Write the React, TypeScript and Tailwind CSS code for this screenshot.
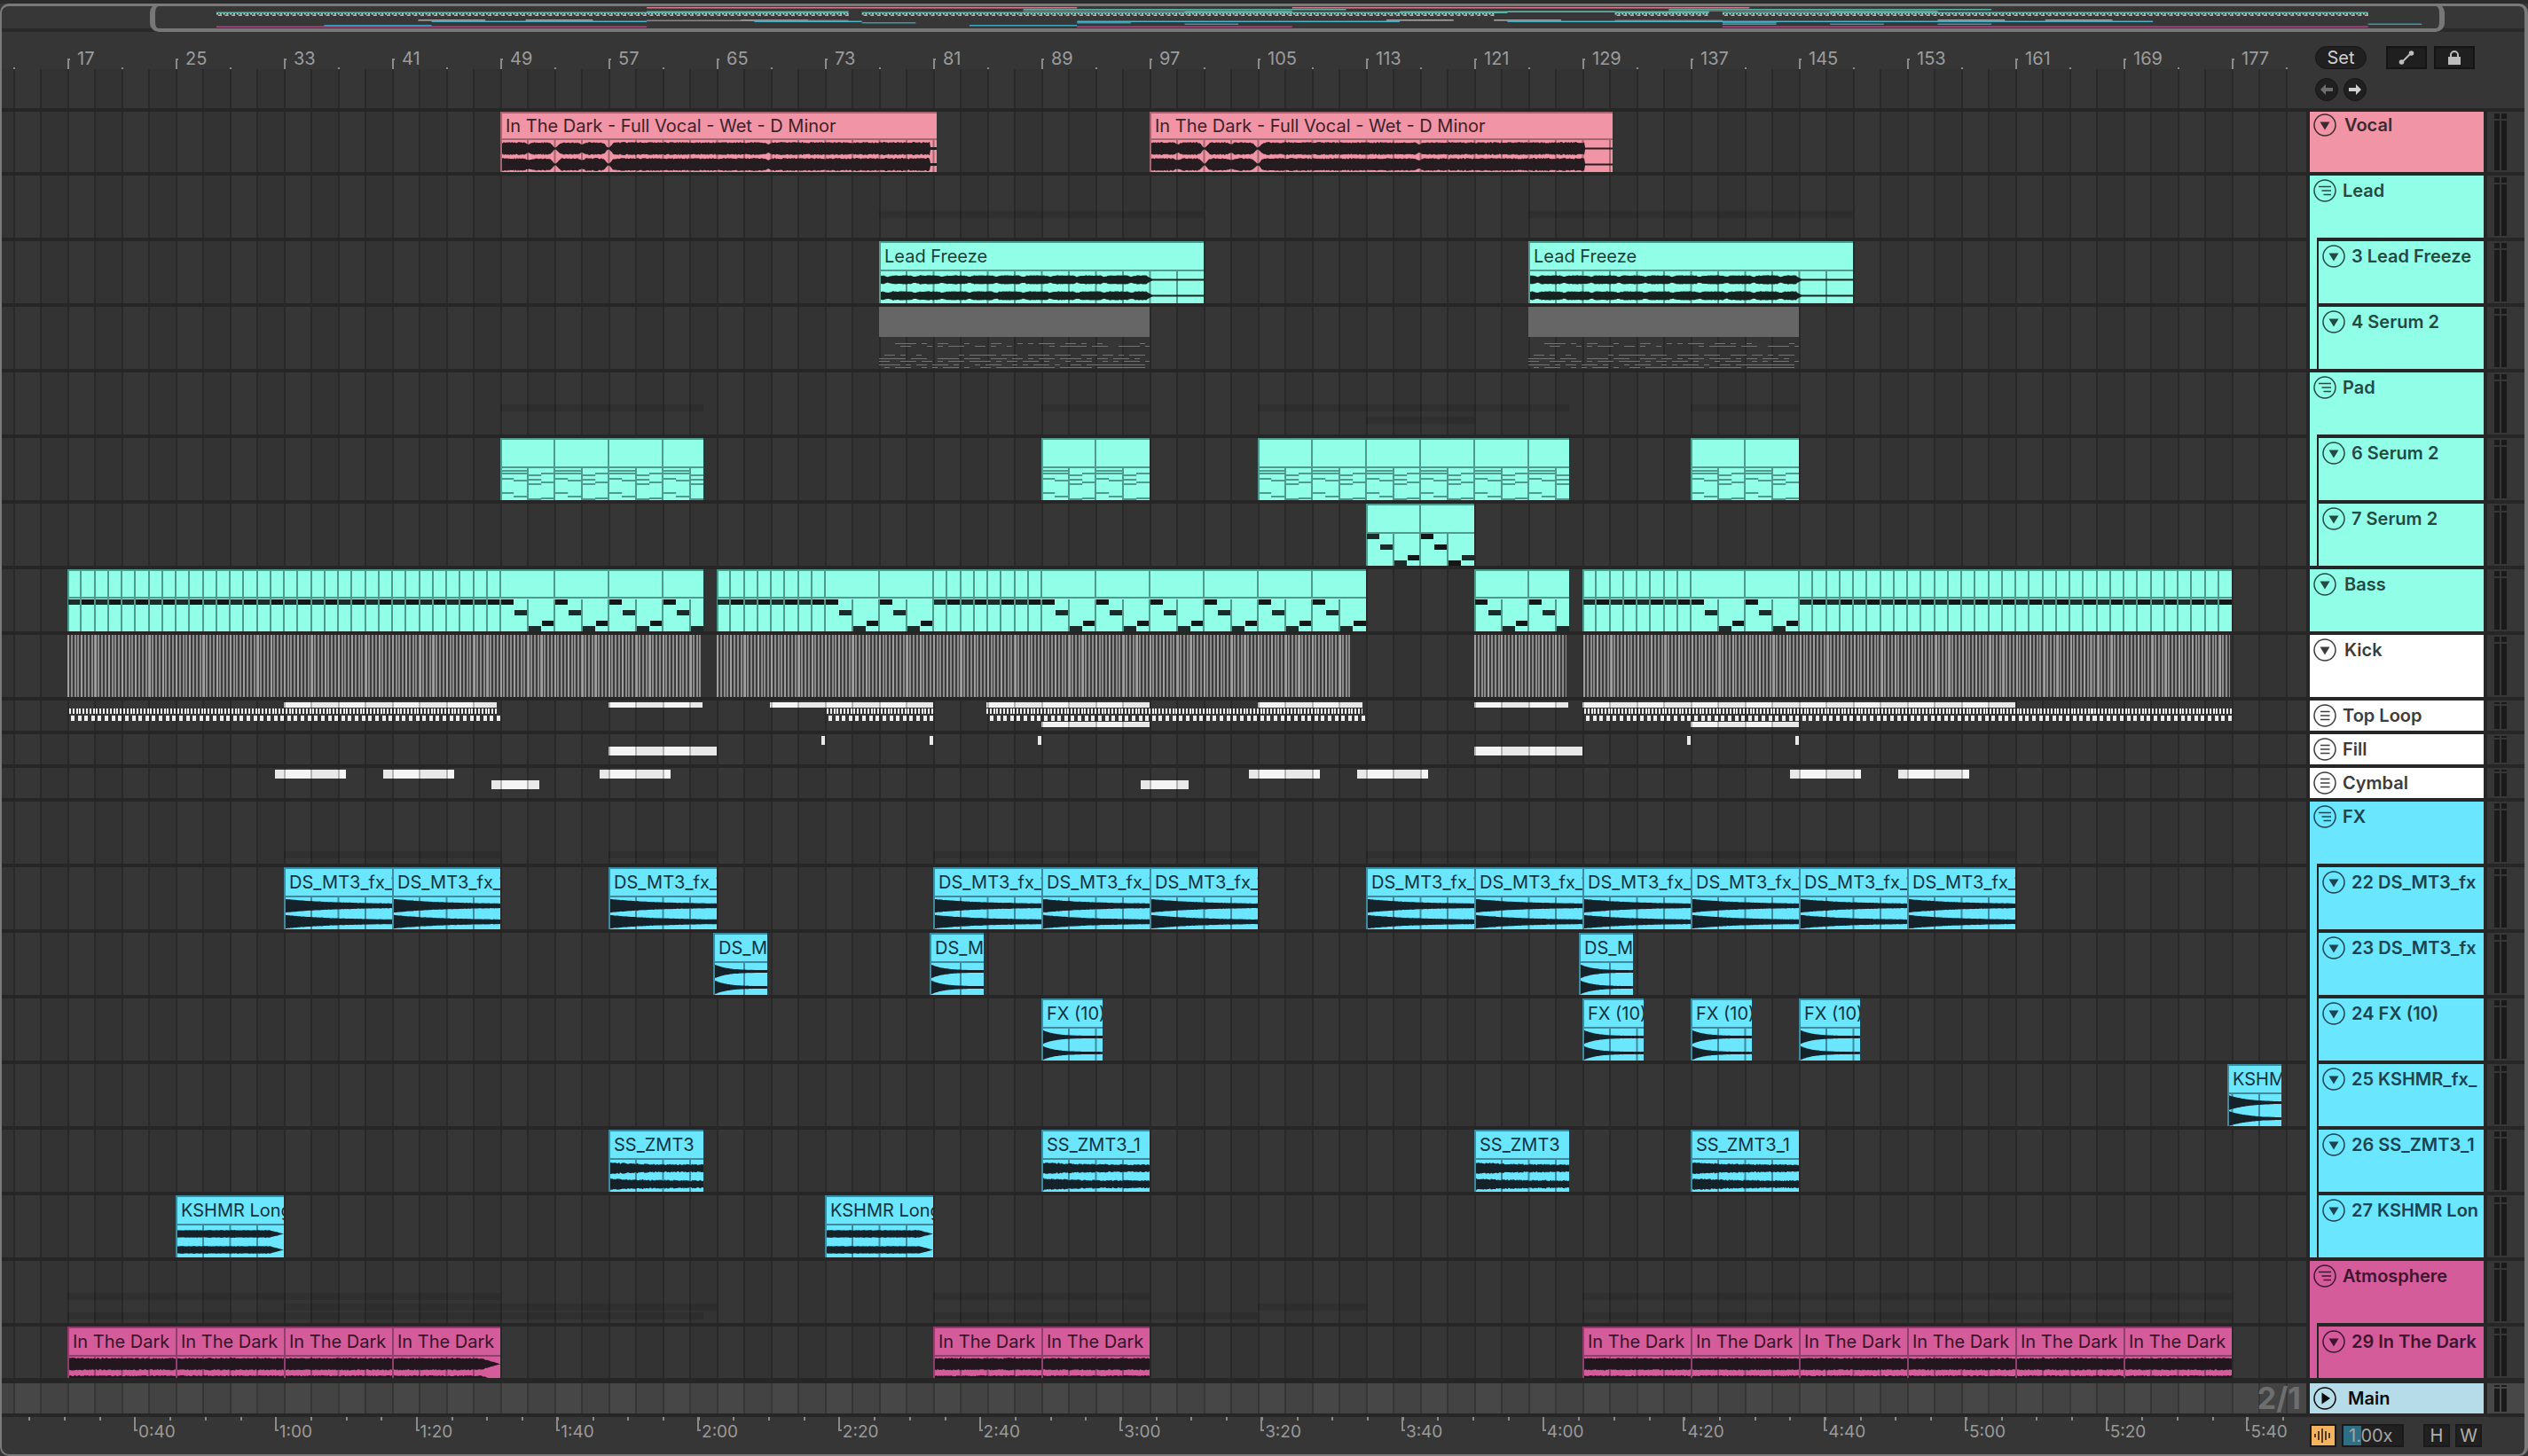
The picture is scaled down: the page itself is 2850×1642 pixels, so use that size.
import React from "react";

const x = (b: number) => Math.round(76 + (b - 17) * 15.25);
const ov = (b: number) => 244 + (b - 17) * 15.16;

type Pal = { bg: string; bd: string; tx: string; hd: string; line: string; wave: string };
const P: Record<string, Pal> = {
  pink: { bg: "bg-[#f194a6]", bd: "border-[#a3656f]", tx: "text-[#3d2229]", hd: "text-[#3d2a30]", line: "#a3656f", wave: "#241c1e" },
  teal: { bg: "bg-[#91ffe8]", bd: "border-[#4f9a8d]", tx: "text-[#1c3f39]", hd: "text-[#234a43]", line: "#4f9a8d", wave: "#17211f" },
  cyan: { bg: "bg-[#6be6ff]", bd: "border-[#3f8a9c]", tx: "text-[#12323b]", hd: "text-[#1b4450]", line: "#3f8a9c", wave: "#16222a" },
  mag: { bg: "bg-[#d55c9a]", bd: "border-[#8f3f6b]", tx: "text-[#36132a]", hd: "text-[#3d1530]", line: "#8f3f6b", wave: "#23161e" },
  white: { bg: "bg-[#ffffff]", bd: "border-[#999999]", tx: "text-[#3a3a3a]", hd: "text-[#3c3c3c]", line: "#999999", wave: "#222222" },
  main: { bg: "bg-[#b5dce8]", bd: "border-[#78929a]", tx: "text-[#0b0b0b]", hd: "text-[#0b0b0b]", line: "#78929a", wave: "#111111" },
};

const GRID =
  "bg-[repeating-linear-gradient(90deg,#292929_14.5px,#292929_16.5px,#363636_16.5px,#363636_45px,#292929_45px,#292929_47px,#333333_47px,#333333_75.5px)]";
const GRID_MAIN =
  "bg-[repeating-linear-gradient(90deg,#363636_14.5px,#363636_16.5px,#474747_16.5px,#474747_45px,#363636_45px,#363636_47px,#434343_47px,#434343_75.5px)]";

const rnd = (i: number, s: number) => {
  const v = Math.sin(i * 12.9898 + s * 78.233) * 43758.5453;
  return v - Math.floor(v);
};

function GridLines({ left, width, color, h }: { left: number; width: number; color: string; h: number }) {
  const out: React.ReactNode[] = [];
  for (let k = 0; k < 90; k++) {
    const X = 15.5 + 30.5 * k - left;
    if (X > 3 && X < width - 1) out.push(<rect key={k} x={X - 1} y={0} width={2} height={h} fill={color} />);
  }
  return <>{out}</>;
}

type Kind = "vocal" | "vocal2" | "freeze" | "decay" | "fast" | "band" | "noisy" | "kshmr" | "dark" | "darkEnd";

function ampFor(kind: Kind, px: number, w: number, seed: number, ch: number) {
  const n = rnd(px + ch * 31, seed);
  const pinch = (c: number, d: number, s: number) => 1 - d * Math.exp(-(((px - c) / s) ** 2));
  switch (kind) {
    case "vocal":
    case "vocal2": {
      let a = 6 + n * 1.5;
      [[30, 0.3, 3], [60, 0.85, 4], [90, 0.3, 3], [120, 0.85, 4], [kind === "vocal" ? 300 : 302, 0.3, 3]].forEach(
        ([c, d, s]) => (a *= pinch(c, d, s))
      );
      const tailAt = kind === "vocal" ? 482 : 488;
      if (px > tailAt) a = kind === "vocal" ? 1.5 : 1;
      return a;
    }
    case "freeze": {
      let a = 4.4 + n * 0.8;
      const ph = (px + 7) % 30.5;
      a *= 1 - 0.3 * Math.exp(-(((ph - 15) / 3) ** 2));
      if (px > 306) a = 0.9;
      else if (px > 300) a = 0.9 + (306 - px) * 0.5;
      return a;
    }
    case "decay":
      return 1.8 + 5.6 * Math.exp(-px / 55) + n * 0.4;
    case "fast":
      return 1.2 + 6.4 * Math.exp(-px / 14) + n * 0.2;
    case "band":
      return (3.8 + n * 0.6) * (px > w - 16 ? Math.max(0, (w - px) / 16) : 1);
    case "noisy":
      return 3 + 2.6 * Math.exp(-px / 40) + n * 1.6;
    case "kshmr":
      return 0.8 + 7.4 * Math.exp(-px / 22) + n * 0.2;
    case "dark":
      return 5.8 + n * 1.4;
    case "darkEnd":
      return (5.8 + n * 1.4) * (px > w - 22 ? Math.max(0.05, (w - px) / 22) : 1);
  }
}

function Wave({ kind, left, width, pal, h = 36, seed = 1 }: { kind: Kind; left: number; width: number; pal: Pal; h?: number; seed?: number }) {
  const w = width - 2;
  const dark = kind === "dark" || kind === "darkEnd";
  const cs = dark ? [8.3, 28] : [9.5, 27.5];
  const paths = cs.map((c, ci) => {
    const up: string[] = [];
    const dn: string[] = [];
    for (let px = 0; px <= w; px += 1) {
      const a = ampFor(kind, px, w, seed, ci);
      up.push(`${px},${(c - a).toFixed(1)}`);
      dn.unshift(`${px},${(c + a).toFixed(1)}`);
    }
    return "M" + up.join("L") + "L" + dn.join("L") + "Z";
  });
  return (
    <svg width={w} height={h} className="block shrink-0">
      <GridLines left={left + 2} width={w} color={pal.line} h={h} />
      {paths.map((d, i) => (
        <path key={i} d={d} fill={pal.wave} />
      ))}
    </svg>
  );
}

function Clip({ from, to, title, pal, kind, short, seed }: { from: number; to: number; title: string; pal: Pal; kind: Kind; short?: boolean; seed?: number }) {
  const left = x(from);
  const width = x(to) - left;
  return (
    <div className={`absolute top-0 bottom-0 flex flex-col overflow-hidden border-l-2 border-t-2 ${pal.bg} ${pal.bd}`} style={{ left, width }}>
      <div className={`min-h-0 flex-1 flex items-center pl-[4px] border-b-2 whitespace-nowrap text-[20px] leading-none ${pal.bd} ${pal.tx}`}>{title}</div>
      <Wave kind={kind} left={left} width={width} pal={pal} h={short ? 24 : 36} seed={seed ?? from} />
    </div>
  );
}

const LEVEL = [0, 12, 30, 24];

function BassClip({ from, to, pats }: { from: number; to: number; pats: [number, number][] }) {
  const left = x(from);
  const W = x(to) - left;
  const inPat = (b: number) => pats.find(([a, z]) => b >= a && b < z);
  const els: React.ReactNode[] = [];
  for (let b = from; b < to; b++) {
    const X = x(b) - left;
    const pat = inPat(b);
    const nw = Math.min(14, W - X);
    if (pat) {
      const ph = (b - pat[0]) % 4;
      els.push(<rect key={"n" + b} x={X + 1} y={34 + LEVEL[ph]} width={nw} height={6} fill={(b >> 1) % 2 ? "#1c2c2a" : "#121616"} />);
      if ((b - pat[0]) % 4 === 0 && b > from) els.push(<rect key={"t" + b} x={X - 1} y={2} width={2} height={30} fill="#4f9a8d" />);
      if ((b - pat[0]) % 2 === 0 && b > from) els.push(<rect key={"c" + b} x={X - 1} y={34} width={2} height={36} fill="#4f9a8d" />);
    } else {
      els.push(<rect key={"n" + b} x={X + 1} y={34} width={nw} height={6} fill={b % 2 ? "#1c2c2a" : "#121616"} />);
      if (b > from) els.push(<rect key={"l" + b} x={X - 1} y={2} width={2} height={68} fill="#4f9a8d" />);
    }
  }
  return (
    <svg className="absolute top-0 block" style={{ left }} width={W} height={70}>
      <rect width={W} height={70} fill="#91ffe8" />
      <rect width={W} height={2} fill="#4f9a8d" />
      <rect width={2} height={70} fill="#4f9a8d" />
      <rect y={31} width={W} height={2} fill="#4f9a8d" />
      {els}
    </svg>
  );
}

const PAD_LINES = [
  [2, 5, 11, 27],
  [2, 5, 13, 31],
  [7, 12, 17, 34],
  [5, 15, 33],
];

function PadClip({ from, to }: { from: number; to: number }) {
  const left = x(from);
  const W = x(to) - left;
  const els: React.ReactNode[] = [];
  for (let b = from; b < to; b++) {
    const X = x(b) - left;
    const ph = (b - from) % 4;
    PAD_LINES[ph].forEach((y, i) => els.push(<rect key={`${b}-${i}`} x={X} y={34 + y} width={Math.min(15.25, W - X)} height={2} fill="#4f9a8d" />));
    if (ph === 0 && b > from) els.push(<rect key={"t" + b} x={X - 1} y={2} width={2} height={30} fill="#4f9a8d" />);
    if (ph % 2 === 0 && b > from) els.push(<rect key={"c" + b} x={X - 1} y={34} width={2} height={36} fill="#4f9a8d" />);
  }
  return (
    <svg className="absolute top-0 block" style={{ left }} width={W} height={70}>
      <rect width={W} height={70} fill="#91ffe8" />
      <rect width={W} height={2} fill="#4f9a8d" />
      <rect width={2} height={70} fill="#4f9a8d" />
      <rect y={32} width={W} height={2} fill="#4f9a8d" />
      {els}
    </svg>
  );
}

function NoteClip({ from, to }: { from: number; to: number }) {
  const left = x(from);
  const W = x(to) - left;
  const els: React.ReactNode[] = [];
  for (let b = from; b < to; b++) {
    const X = x(b) - left;
    const ph = (b - from) % 4;
    els.push(<rect key={"n" + b} x={X + 1} y={34 + LEVEL[ph]} width={14} height={6} fill={(b >> 2) % 2 ? "#121616" : "#1c2c2a"} />);
    if (ph === 0 && b > from) els.push(<rect key={"t" + b} x={X - 1} y={2} width={2} height={30} fill="#4f9a8d" />);
    if (ph % 2 === 0 && b > from) els.push(<rect key={"c" + b} x={X - 1} y={34} width={2} height={36} fill="#4f9a8d" />);
  }
  return (
    <svg className="absolute top-0 block" style={{ left }} width={W} height={70}>
      <rect width={W} height={70} fill="#91ffe8" />
      <rect width={W} height={2} fill="#4f9a8d" />
      <rect width={2} height={70} fill="#4f9a8d" />
      <rect y={32} width={W} height={2} fill="#4f9a8d" />
      {els}
    </svg>
  );
}

function Frozen({ from, to }: { from: number; to: number }) {
  const left = x(from);
  const W = x(to) - left;
  const rows = [7, 10, 20, 24, 27, 31, 34];
  const els: React.ReactNode[] = [];
  for (let px = 0; px < W; px += 6) {
    rows.forEach((y, i) => {
      if (rnd(Math.floor(px / 6) + i * 17, 3) > 0.45)
        els.push(<rect key={`${px}-${i}`} x={px} y={y} width={6} height={1} fill="#727272" />);
    });
  }
  return (
    <div className="absolute top-0 bottom-0 flex flex-col" style={{ left, width: W }}>
      <div className="h-[34px] bg-[#666666]" />
      <svg width={W} height={36} className="block">
        {els}
      </svg>
    </div>
  );
}

const Mini = ({ l, r, cls }: { l: number; r: number; cls: string }) => <div className={`absolute ${cls}`} style={{ left: l, width: r - l }} />;

const Stripes = ({ y, spans }: { y: string; spans: [number, number][] }) => (
  <>
    {spans.map(([a, b], i) => (
      <div key={i} className={`absolute h-[8px] bg-black/10 ${y}`} style={{ left: x(a), width: x(b) - x(a) }} />
    ))}
  </>
);

const KICK =
  "absolute top-0 bottom-0 bg-[repeating-linear-gradient(90deg,#a0a0a0_0,#a0a0a0_2px,transparent_2px,transparent_15.25px),repeating-linear-gradient(90deg,#8c8c8c_0,#8c8c8c_2px,#3c3c3c_2px,#3c3c3c_3.81px)]";
const WHITE_BG =
  "bg-fixed bg-[repeating-linear-gradient(90deg,#b4b4b4_14.5px,#b4b4b4_16.5px,#f4f4f4_16.5px,#f4f4f4_45px,#b4b4b4_45px,#b4b4b4_47px,#e8e8e8_47px,#e8e8e8_75.5px)]";
const TA = `top-[2px] h-[6px] ${WHITE_BG}`;
const TB = "top-[9px] h-[6px] bg-[repeating-linear-gradient(90deg,#eeeeee_0,#eeeeee_2px,transparent_2px,transparent_3.81px)]";
const TC = "top-[17px] h-[6px] bg-[repeating-linear-gradient(90deg,#eeeeee_0,#eeeeee_4px,transparent_4px,transparent_7.62px)]";
const TD = `top-[24px] h-[6px] ${WHITE_BG}`;
const FT = "top-[2px] h-[10px] w-[4px] bg-[#e8e8e8]";
const FB = `top-[14px] h-[10px] ${WHITE_BG}`;
const CA = `top-[2px] h-[10px] ${WHITE_BG}`;
const CB = `top-[14px] h-[10px] ${WHITE_BG}`;

const bars = (a: number, n: number, step = 8) => Array.from({ length: n }, (_, i) => a + i * step);

type Row = { name: string; h: number; pal: string; icon: "fold" | "group" | "list"; strip?: string; lane?: React.ReactNode };

const rows: Row[] = [
  {
    name: "Vocal", h: 68, pal: "pink", icon: "fold",
    lane: (
      <>
        <Clip from={49} to={81.25} title="In The Dark - Full Vocal - Wet - D Minor" pal={P.pink} kind="vocal" />
        <Clip from={97} to={131.25} title="In The Dark - Full Vocal - Wet - D Minor" pal={P.pink} kind="vocal2" />
      </>
    ),
  },
  { name: "Lead", h: 70, pal: "teal", icon: "group", lane: <Stripes y="top-[40px]" spans={[[77, 101], [125, 149]]} /> },
  {
    name: "3 Lead Freeze", h: 70, pal: "teal", icon: "fold", strip: "teal",
    lane: (
      <>
        <Clip from={77} to={101} title="Lead Freeze" pal={P.teal} kind="freeze" />
        <Clip from={125} to={149} title="Lead Freeze" pal={P.teal} kind="freeze" />
      </>
    ),
  },
  { name: "4 Serum 2", h: 70, pal: "teal", icon: "fold", strip: "teal", lane: (<><Frozen from={77} to={97} /><Frozen from={125} to={145} /></>) },
  {
    name: "Pad", h: 70, pal: "teal", icon: "group",
    lane: (<><Stripes y="top-[36px]" spans={[[49, 64], [89, 97], [105, 128], [137, 145]]} /><Stripes y="top-[50px]" spans={[[113, 121]]} /></>),
  },
  { name: "6 Serum 2", h: 70, pal: "teal", icon: "fold", strip: "teal", lane: (<><PadClip from={49} to={64} /><PadClip from={89} to={97} /><PadClip from={105} to={128} /><PadClip from={137} to={145} /></>) },
  { name: "7 Serum 2", h: 70, pal: "teal", icon: "fold", strip: "teal", lane: <NoteClip from={113} to={121} /> },
  {
    name: "Bass", h: 70, pal: "teal", icon: "fold",
    lane: (
      <>
        <BassClip from={17} to={64} pats={[[49, 64]]} />
        <BassClip from={65} to={113} pats={[[73, 81], [89, 113]]} />
        <BassClip from={121} to={128} pats={[[121, 128]]} />
        <BassClip from={129} to={177} pats={[[137, 145]]} />
      </>
    ),
  },
  {
    name: "Kick", h: 70, pal: "white", icon: "fold",
    lane: (
      <>
        <Mini l={76} r={790} cls={KICK} />
        <Mini l={808} r={1522} cls={KICK} />
        <Mini l={1662} r={1766} cls={KICK} />
        <Mini l={1785} r={2514} cls={KICK} />
      </>
    ),
  },
  {
    name: "Top Loop", h: 34, pal: "white", icon: "list",
    lane: (
      <>
        {[[320, 560], [686, 792], [868, 1052], [1112, 1296], [1418, 1536], [1662, 1768], [1784, 2272]].map(([l, r]) => <Mini key={l} l={l} r={r} cls={TA} />)}
        {[[78, 560], [932, 1052], [1112, 1536], [1786, 2516]].map(([l, r]) => <Mini key={l} l={l} r={r} cls={TB} />)}
        {[[80, 564], [934, 1052], [1116, 1540], [1788, 2516]].map(([l, r]) => <Mini key={l} l={l} r={r} cls={TC} />)}
        {[[1174, 1296], [1906, 2028]].map(([l, r]) => <Mini key={l} l={l} r={r} cls={TD} />)}
      </>
    ),
  },
  {
    name: "Fill", h: 34, pal: "white", icon: "list",
    lane: (
      <>
        {[926, 1048, 1170, 1902, 2024].map((l) => <Mini key={l} l={l} r={l + 4} cls={FT} />)}
        <Mini l={686} r={808} cls={FB} />
        <Mini l={1662} r={1784} cls={FB} />
      </>
    ),
  },
  {
    name: "Cymbal", h: 34, pal: "white", icon: "list",
    lane: (
      <>
        {[[310, 390], [432, 512], [676, 756], [1408, 1488], [1530, 1610], [2018, 2098], [2140, 2220]].map(([l, r]) => <Mini key={l} l={l} r={r} cls={CA} />)}
        {[[554, 608], [1286, 1340]].map(([l, r]) => <Mini key={l} l={l} r={r} cls={CB} />)}
      </>
    ),
  },
  { name: "FX", h: 70, pal: "cyan", icon: "group", lane: <Stripes y="top-[56px]" spans={[[33, 49], [57, 65], [81, 105], [113, 161]]} /> },
  {
    name: "22 DS_MT3_fx", h: 70, pal: "cyan", icon: "fold", strip: "cyan",
    lane: <>{[33, 41, 57, 81, 89, 97, 113, 121, 129, 137, 145, 153].map((b) => <Clip key={b} from={b} to={b + 8} title="DS_MT3_fx_1" pal={P.cyan} kind="decay" />)}</>,
  },
  { name: "23 DS_MT3_fx", h: 70, pal: "cyan", icon: "fold", strip: "cyan", lane: <>{[64.75, 80.75, 128.75].map((b) => <Clip key={b} from={b} to={b + 4} title="DS_MT3_fx_1" pal={P.cyan} kind="fast" />)}</> },
  { name: "24 FX (10)", h: 70, pal: "cyan", icon: "fold", strip: "cyan", lane: <>{[89, 129, 137, 145].map((b) => <Clip key={b} from={b} to={b + 4.55} title="FX (10)" pal={P.cyan} kind="fast" />)}</> },
  { name: "25 KSHMR_fx_", h: 70, pal: "cyan", icon: "fold", strip: "cyan", lane: <Clip from={176.7} to={180.7} title="KSHMR_fx" pal={P.cyan} kind="kshmr" /> },
  {
    name: "26 SS_ZMT3_1", h: 70, pal: "cyan", icon: "fold", strip: "cyan",
    lane: (
      <>
        <Clip from={57} to={64} title="SS_ZMT3" pal={P.cyan} kind="noisy" />
        <Clip from={89} to={97} title="SS_ZMT3_1" pal={P.cyan} kind="noisy" />
        <Clip from={121} to={128} title="SS_ZMT3" pal={P.cyan} kind="noisy" />
        <Clip from={137} to={145} title="SS_ZMT3_1" pal={P.cyan} kind="noisy" />
      </>
    ),
  },
  { name: "27 KSHMR Lon", h: 70, pal: "cyan", icon: "fold", strip: "cyan", lane: <>{[25, 73].map((b) => <Clip key={b} from={b} to={b + 8} title="KSHMR Long" pal={P.cyan} kind="band" />)}</> },
  {
    name: "Atmosphere", h: 70, pal: "mag", icon: "group",
    lane: (
      <>
        <Stripes y="top-[36px]" spans={[[17, 49], [81, 97], [129, 177]]} />
        <Stripes y="top-[48px]" spans={[[33, 65], [105, 113]]} />
        <Stripes y="top-[58px]" spans={[[17, 64], [81, 105], [129, 177]]} />
      </>
    ),
  },
  {
    name: "29 In The Dark", h: 58, pal: "mag", icon: "fold", strip: "mag",
    lane: (
      <>
        {[17, 25, 33, 41, 81, 89, 129, 137, 145, 153, 161, 169].map((b) => (
          <Clip key={b} from={b} to={b + 8} title="In The Dark" pal={P.mag} kind={b === 41 ? "darkEnd" : "dark"} short />
        ))}
      </>
    ),
  },
];

function TrackIcon({ kind, pal }: { kind: "fold" | "group" | "list" | "play"; pal: Pal }) {
  return (
    <svg width={26} height={26} viewBox="0 0 26 26" className={`block shrink-0 ${pal.hd}`}>
      <circle cx={13} cy={13} r={12} fill="none" stroke="currentColor" strokeWidth={1.5} />
      {kind === "fold" && <path d="M7.5 9.5H18.5L13 18.5Z" fill="currentColor" />}
      {kind === "play" && <path d="M9.5 6.5L19 13L9.5 19.5Z" fill="currentColor" />}
      {kind === "group" && <path d="M6 8.5H20M9.5 13H20M11.5 17.5H20" stroke="currentColor" strokeWidth={1.6} fill="none" />}
      {kind === "list" && <path d="M8 8.5H18.5M8 13H18.5M8 17.5H18.5" stroke="currentColor" strokeWidth={1.6} fill="none" />}
    </svg>
  );
}

const Meter = ({ tall }: { tall: boolean }) => (
  <div className="flex h-full gap-[2px]">
    {[0, 1].map((i) => (
      <div key={i} className="flex h-full w-[6px] flex-col gap-[2px]">
        <div className={`w-full bg-[#1a1a1a] ${tall ? "h-[6px]" : "h-[2px]"}`} />
        <div className="w-full flex-1 bg-[#1a1a1a]" />
      </div>
    ))}
  </div>
);

function TrackRow({ r }: { r: Row }) {
  const pal = P[r.pal];
  const isLow = r.icon === "list";
  return (
    <div className="flex" style={{ height: r.h }}>
      <div className={`relative h-full w-[2600px] ${GRID}`}>{r.lane}</div>
      <div className={`relative ml-[4px] h-full w-[196px] ${r.strip ? "pl-[10px]" : ""}`}>
        {r.strip && <div className={`absolute bottom-0 left-0 top-[-4px] w-[8px] ${P[r.strip].bg}`} />}
        <div className={`flex h-full items-start pl-[4px] ${r.name === "Vocal" ? "pt-[2px]" : "pt-[4px]"} ${pal.bg}`}>
          <TrackIcon kind={r.icon} pal={pal} />
          <span
            className={`whitespace-nowrap font-semibold text-[20px] leading-[26px] ${pal.hd} ${r.strip ? "ml-[7px]" : r.icon === "fold" ? "ml-[9px]" : "ml-[7px]"}`}
          >
            {r.name}
          </span>
        </div>
      </div>
      <div className="ml-[4px] h-full flex-1 bg-[#363636] py-[2px] pl-[8px]">
        <Meter tall={!isLow} />
      </div>
    </div>
  );
}

function Overview() {
  type O = [number, number, number, string];
  const d: O[] = [];
  const add = (y: number, c: string, sp: number[][]) => sp.forEach(([a, b]) => d.push([a, b, y, c]));
  add(8, "#d8788a", [[49, 81], [97, 131]]);
  add(10, "#58b0a0", [[77, 101], [125, 149]]);
  add(11.5, "#777777", [[77, 97], [125, 145]]);
  add(12.5, "#58b0a0", [[49, 64], [89, 97], [105, 128], [137, 145], [113, 121]]);
  add(13.5, "#5db4a6", [[17, 64], [65, 113], [121, 128], [129, 177]]);
  add(22, "#aaaaaa", [[32, 37], [40, 45], [56, 61], [104, 109], [112, 117], [145, 150], [153, 158]]);
  add(23.5, "#49b3cc", [[33, 49], [57, 65], [81, 105], [113, 161]]);
  add(25, "#3a97ac", [[65, 69], [81, 85], [129, 133]]);
  add(26.5, "#3a97ac", [[89, 93], [129, 133], [137, 141], [145, 149], [177, 181]]);
  add(28, "#3fa6bd", [[25, 33], [73, 81]]);
  add(29.5, "#a84b80", [[17, 49], [81, 97], [129, 177]]);
  add(22.5, "#888888", [[49, 64], [121, 129]]);
  const dots: React.ReactNode[] = [];
  [[17, 64], [65, 112], [121, 128], [129, 177]].forEach(([a, b], i) => {
    for (let px = ov(a); px < ov(b); px += 3.8) dots.push(<rect key={`a${i}-${px}`} x={px} y={15} width={2} height={1.5} fill="#c8c8c8" />);
    for (let px = ov(a) + 2; px < ov(b); px += 7.6) dots.push(<rect key={`b${i}-${px}`} x={px} y={16.5} width={4} height={1.5} fill="#b8b8b8" />);
  });
  return (
    <div className="relative h-[36px] w-full shrink-0 bg-[#2b2b2b] pt-[4px]">
      <div className="flex h-full flex-col">
        <div className="min-h-0 flex-1 bg-[#373737]" />
        <div className="h-[4px] bg-[#2a2a2a]" />
      </div>
      <svg width={2850} height={36} className="absolute left-0 top-0 block">
        {d.map(([a, b, y, c], i) => (
          <rect key={i} x={ov(a)} y={y} width={ov(b) - ov(a)} height={1.5} fill={c} />
        ))}
        {dots}
      </svg>
      <div className="absolute left-[169px] top-[4px] h-[32px] w-[2587px] rounded-[10px] border-x-[6px] border-b-[4px] border-t-[3px] border-[#777777] bg-transparent" />
    </div>
  );
}

const MARKS = bars(17, 21);
const TIMES = ["0:40", "1:00", "1:20", "1:40", "2:00", "2:20", "2:40", "3:00", "3:20", "3:40", "4:00", "4:20", "4:40", "5:00", "5:20", "5:40"];

function Ruler() {
  return (
    <div className="flex h-[86px] shrink-0 bg-[#363636]">
      <div className="flex w-[2600px] flex-col">
        <div className="relative flex h-[42px] items-end overflow-hidden pl-[76px]">
          <div className="absolute bottom-0 left-[15px] h-[2px] w-[2px] bg-[#8a8a8a]" />
          {MARKS.map((m) => (
            <div key={m} className="relative flex h-full w-[122px] shrink-0 items-end">
              <div className="h-[12px] w-[3px] border-l-2 border-t-2 border-[#8a8a8a]" />
              <span className="mb-[2px] ml-[8px] text-[20px] leading-[20px] text-[#9c9c9c]">{m}</span>
              <div className="absolute bottom-0 left-[61px] h-[2px] w-[2px] bg-[#8a8a8a]" />
            </div>
          ))}
        </div>
        <div className={`h-[44px] ${GRID}`} />
      </div>
      <div className="flex-1 pl-[10px] pt-[16px]">
        <div className="flex items-center">
          <div className="flex h-[26px] w-[58px] items-center justify-center rounded-full border border-[#161616] bg-[#202020] text-[20px] leading-none text-[#cfcfcf]">Set</div>
          <div className="ml-[22px] flex h-[26px] w-[46px] items-center justify-center border-2 border-[#141414] bg-[#1f1f1f]">
            <svg width={18} height={16} viewBox="0 0 18 16">
              <path d="M4 13L14 3" stroke="#bdbdbd" strokeWidth={2} />
              <circle cx={3.5} cy={13} r={2.8} fill="#bdbdbd" />
              <circle cx={14.5} cy={3} r={2.8} fill="#bdbdbd" />
            </svg>
          </div>
          <div className="ml-[8px] flex h-[26px] w-[46px] items-center justify-center border-2 border-[#141414] bg-[#1f1f1f]">
            <svg width={16} height={16} viewBox="0 0 16 16">
              <path d="M4 7V5a4 4 0 0 1 8 0v2" fill="none" stroke="#bdbdbd" strokeWidth={2} />
              <rect x={1} y={7} width={14} height={9} fill="#bdbdbd" />
            </svg>
          </div>
        </div>
        <div className="mt-[10px] flex gap-[6px]">
          {[0, 1].map((i) => (
            <div key={i} className="flex h-[26px] w-[26px] items-center justify-center rounded-full border border-[#161616] bg-[#202020]">
              <svg width={16} height={14} viewBox="0 0 16 14">
                {i === 0 ? (
                  <path d="M1 7L7 1V5H15V9H7V13Z" fill="#6e6e6e" />
                ) : (
                  <path d="M15 7L9 1V5H1V9H9V13Z" fill="#d0d0d0" />
                )}
              </svg>
            </div>
          ))}
        </div>
      </div>
    </div>
  );
}

function MainRow() {
  return (
    <div className="flex h-[34px]">
      <div className={`relative h-full w-[2600px] ${GRID_MAIN}`}>
        <span className="absolute right-[6px] top-[-3px] text-[34px] font-bold leading-[40px] text-[#6e6e6e]">2/1</span>
      </div>
      <div className={`ml-[4px] flex h-full w-[196px] items-center pl-[4px] ${P.main.bg}`}>
        <TrackIcon kind="play" pal={P.main} />
        <span className={`ml-[13px] text-[20px] font-semibold leading-[26px] ${P.main.hd}`}>Main</span>
      </div>
      <div className="ml-[4px] h-full flex-1 bg-[#474747] py-[2px] pl-[8px]">
        <Meter tall={false} />
      </div>
    </div>
  );
}

function Footer() {
  return (
    <div className="flex min-h-0 flex-1 bg-[#363636]">
      <div className="flex w-[2600px] flex-col overflow-hidden">
        <div className="h-[4px] shrink-0 bg-[repeating-linear-gradient(90deg,#8a8a8a_32.4px,#8a8a8a_34.4px,transparent_34.4px,transparent_72.1px)]" />
        <div className="-mt-[4px] flex pl-[151px]">
          {TIMES.map((t) => (
            <div key={t} className="flex w-[158.77px] shrink-0 items-start">
              <div className="h-[16px] w-[4px] border-b-2 border-l-2 border-[#8a8a8a]" />
              <span className="ml-[1px] mt-[7px] text-[19px] leading-[20px] text-[#9a9a9a]">{t}</span>
            </div>
          ))}
        </div>
      </div>
      <div className="ml-[4px] flex flex-1 items-start pt-[8px]">
        <div className="flex h-[26px] w-[30px] items-center justify-center border-2 border-[#1a1a1a] bg-[#f5b25f]">
          <svg width={22} height={18} viewBox="0 0 22 18">
            <path d="M2 7V11M6 4V14M10 1V17M14 4V14M18 6V12" stroke="#2a2015" strokeWidth={1.6} />
          </svg>
        </div>
        <div className="relative ml-[6px] flex h-[26px] w-[70px] items-center border-2 border-[#1a1a1a] bg-[#202020] pl-[6px] text-[20px] leading-none text-[#a5a5a5]">
          <div className="absolute bottom-0 left-0 top-0 w-[20px] bg-[#2f6f85]" />
          <span className="relative">1.00x</span>
        </div>
        <div className="ml-[22px] flex h-[26px] w-[30px] items-center justify-center border-2 border-[#1a1a1a] bg-[#202020] text-[20px] leading-none text-[#b0b0b0]">H</div>
        <div className="ml-[6px] flex h-[26px] w-[30px] items-center justify-center border-2 border-[#1a1a1a] bg-[#202020] text-[20px] leading-none text-[#b0b0b0]">W</div>
      </div>
    </div>
  );
}

export default function App() {
  return (
    <div className="relative flex h-[1642px] w-[2850px] flex-col overflow-hidden bg-[#262626] font-['Inter','Liberation_Sans',sans-serif]">
      <Overview />
      <Ruler />
      <div className="flex shrink-0 flex-col gap-[4px] pt-[4px]">
        {rows.map((r) => (
          <TrackRow key={r.name} r={r} />
        ))}
      </div>
      <div className="h-[6px] shrink-0" />
      <MainRow />
      <div className="h-[4px] shrink-0" />
      <Footer />
      <div className="pointer-events-none absolute inset-x-0 bottom-0 top-[4px] rounded-[10px] border-b-2 border-l-2 border-r-[4px] border-t-[3px] border-[#7a7a7a]" />
    </div>
  );
}
